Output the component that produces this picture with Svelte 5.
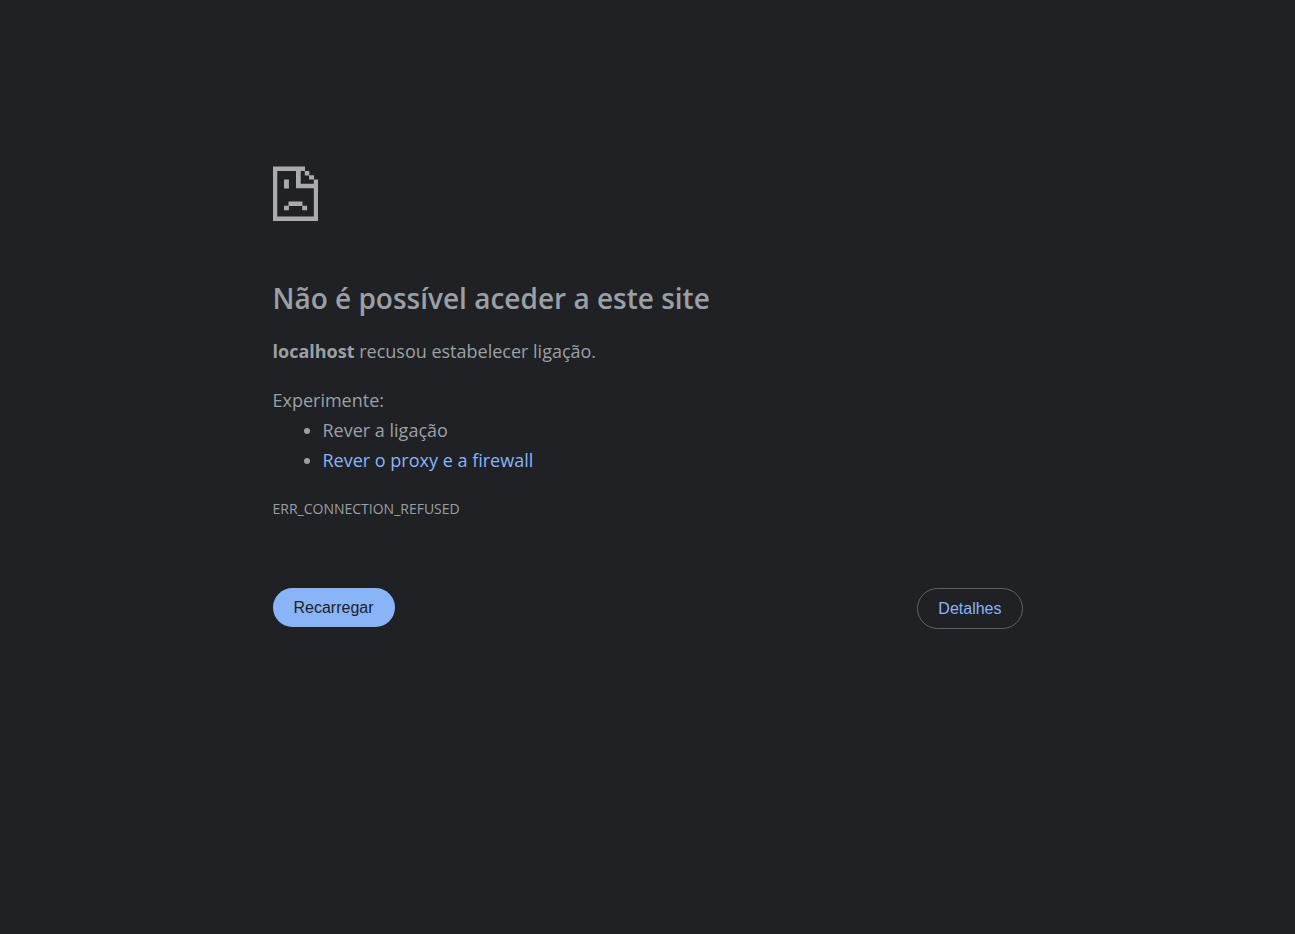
<script>
  let label = 'Recarregar';
</script>

<svelte:head>
  <title>localhost</title>
</svelte:head>

<div class="page">
  <main>
    <svg class="icon" viewBox="0 0 45 55" width="45" height="55" aria-hidden="true">
      <g fill="#ababab">
        <path
          fill-rule="evenodd"
          d="M0 .6H32V5H36.3V9.2H41V13.4H45V55H0ZM4.3 5V50.6H40.8V22.2H23V5ZM27.7 5V17.8H40.8V13.6H36.1V9.4H31.8V5Z"
        />
        <path d="M11 13.4h4.9v9.2H11zM15.5 35.4h14v4.5h-14zM11 39.7h4.9v4.6H11zM29.2 39.7h4.9v4.6h-4.9z" />
      </g>
    </svg>

    <h1>Não é possível aceder a este site</h1>
    <p class="summary"><strong>localhost</strong> recusou estabelecer ligação.</p>

    <div class="suggestions">
      <p>Experimente:</p>
      <ul>
        <li>Rever a ligação</li>
        <li><a href="#buttons">Rever o proxy e a firewall</a></li>
      </ul>
    </div>

    <p class="code">ERR_CONNECTION_REFUSED</p>

    <div class="buttons" id="buttons">
      <button class="primary" type="button">{label}</button>
      <button class="secondary" type="button">Detalhes</button>
    </div>
  </main>
</div>

<style>
  :global(body) {
    margin: 0;
    background: #202124;
  }

  .page {
    box-sizing: border-box;
    min-height: 100vh;
    padding: 166px 24px 40px;
    background: #202124;
    color: #9aa0a6;
    font: 18px/30px 'Open Sans', 'Noto Sans', sans-serif;
  }

  main {
    max-width: 750px;
    margin: 0 auto;
  }

  .icon {
    display: block;
  }

  h1 {
    margin: 59px 0 20px;
    font-size: 28px;
    font-weight: 600;
    line-height: 36px;
  }

  p {
    margin: 0;
  }

  .suggestions {
    margin-top: 19px;
  }

  ul {
    margin: 0;
    padding-left: 50px;
  }

  a {
    color: #8ab4f8;
    text-decoration: none;
  }

  .code {
    margin-top: 24px;
    font-size: 14px;
    line-height: 20px;
  }

  .buttons {
    display: flex;
    align-items: flex-start;
    justify-content: space-between;
    margin-top: 69px;
  }

  button {
    padding: 10px 21px;
    border: 0;
    border-radius: 20px;
    font: 16px/19px 'Liberation Sans', Arial, sans-serif;
    cursor: pointer;
  }

  .primary {
    background: #8ab4f8;
    color: #202124;
  }

  .secondary {
    padding: 10px 20px;
    border: 1px solid #5f6368;
    border-radius: 21px;
    background: transparent;
    color: #8ab4f8;
  }
</style>
